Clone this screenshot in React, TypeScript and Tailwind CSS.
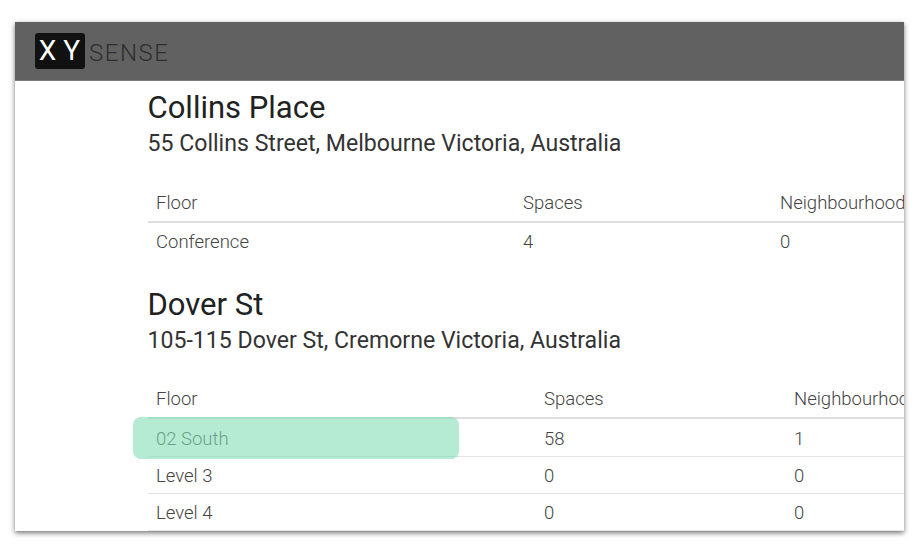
const tables = [
  {
    name: 'Collins Place',
    address: '55 Collins Street, Melbourne Victoria, Australia',
    cols: 'grid-cols-[367px_257px_1fr]',
    head: 'h-[37px]',
    rowPad: 'pt-[2px]',
    rows: [['Conference', '4', '0']],
  },
  {
    name: 'Dover St',
    address: '105-115 Dover St, Cremorne Victoria, Australia',
    cols: 'grid-cols-[388px_250px_1fr]',
    head: 'h-[36px]',
    rowPad: 'pt-[4px]',
    rows: [
      ['02 South', '58', '1'],
      ['Level 3', '0', '0'],
      ['Level 4', '0', '0'],
    ],
  },
];

function Building({ name, address, cols, head, rowPad, rows }: (typeof tables)[number]) {
  return (
    <section>
      <h2 className="ml-[-0.5px] text-[31px] leading-[36px] text-[#212121]">{name}</h2>
      <p className="ml-[-0.5px] mt-[1px] text-[23.1px] leading-[34px] text-[#333333]">{address}</p>
      <div className={`mt-[25px] grid ${cols} ${head} items-center border-b-2 border-[#dedede] text-[18.5px] font-light text-[#444444]`}>
        <div className="pl-2">Floor</div>
        <div className="pl-2">Spaces</div>
        <div className="pl-2 whitespace-nowrap">Neighbourhoods</div>
      </div>
      {rows.map((row, r) => (
        <div key={row[0]} className={`grid ${cols} items-center ${rowPad} text-[18.5px] font-light text-[#444444] ${r === 0 ? 'h-[38px]' : 'h-[37px]'} ${rows.length > 1 ? 'border-b border-[#e4e4e4]' : ''}`}>
          {row.map((cell, i) => (
            <div key={i} className="pl-2">{cell}</div>
          ))}
        </div>
      ))}
    </section>
  );
}

export default function App() {
  return (
    <div className="h-[552px] w-[924px] overflow-hidden bg-white pl-[15px] pt-[22px] font-['Roboto',sans-serif]">
      <div className="relative h-[509px] w-[889px] overflow-hidden bg-white shadow-[0_2px_5px_rgba(0,0,0,0.55)]">
        <header className="flex h-[59px] items-center border-b border-[#7a7a7a] bg-[#616161] pl-[20px]">
          <div className="flex h-[36px] w-[50px] items-center justify-center rounded-[3px] bg-[#111111] pl-[6px] text-[28px] font-normal tracking-[7px] text-white">XY</div>
          <span className="ml-[4px] mt-[4px] text-[24px] font-light tracking-[1.5px] text-[#2e2e2e]">SENSE</span>
        </header>
        <main className="flex flex-col gap-[26px] pl-[133px] pt-[9px]">
          {tables.map((t) => (
            <Building key={t.name} {...t} />
          ))}
        </main>
        <div className="absolute left-[118px] top-[395px] h-[42px] w-[326px] rounded-[8px] bg-[#84dcb6]/60" />
      </div>
    </div>
  );
}
